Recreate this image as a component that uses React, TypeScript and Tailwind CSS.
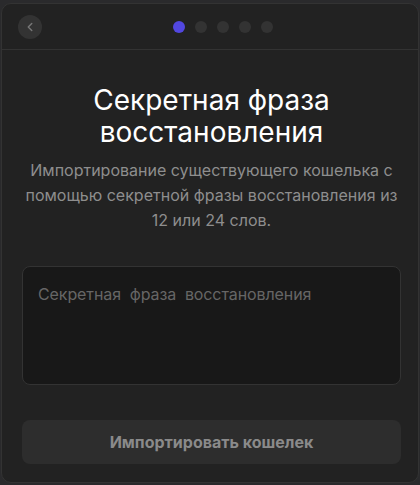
import { ChevronLeft } from "lucide-react";

export default function App() {
  const steps = [0, 1, 2, 3, 4];
  return (
    <div className="h-[485px] w-[420px] bg-[#2a2a2c] pt-[3px] pl-[1px] font-['Inter','Noto_Sans',sans-serif]">
      <div className="flex h-[480px] w-[418px] flex-col rounded-[10px] border border-[#333333] bg-[#222222]">
        <div className="flex h-[46px] items-center border-b border-[#333333] px-[16px]">
          <button className="flex h-[24px] w-[24px] items-center justify-center rounded-full bg-[#333333]">
            <ChevronLeft className="h-[14px] w-[14px] text-[#777777]" strokeWidth={2.5} />
          </button>
          <div className="ml-[131px] flex items-center gap-[10px]">
            {steps.map((s) => (
              <span
                key={s}
                className={`h-[12px] w-[12px] rounded-full ${
                  s === 0 ? "bg-[#5247e0]" : "bg-[#333333]"
                }`}
              />
            ))}
          </div>
        </div>

        <div className="flex flex-1 flex-col pl-[20px] pr-[17px] pt-[34px]">
          <h1 className="text-center text-[28px] font-normal leading-[32px] text-white">
            Секретная фраза
            <br />
            восстановления
          </h1>
          <p className="mt-[10px] text-center text-[16px] leading-[25px] text-[#8e8e8e]">
            Импортирование существующего кошелька с помощью секретной фразы восстановления из 12 или 24 слов.
          </p>

          <textarea
            placeholder="Секретная  фраза  восстановления"
            className="mt-[33px] h-[119px] w-full resize-none rounded-[8px] border border-[#333333] bg-[#181818] px-[15px] py-[16px] text-[16px] leading-[22px] tracking-[-0.1px] text-white outline-none placeholder:text-[#666666]"
          />

          <button className="mt-[35px] h-[44px] w-full rounded-[8px] bg-[#2d2d2d] text-[16px] font-bold text-[#8a8a8a]">
            Импортировать кошелек
          </button>
        </div>
      </div>
    </div>
  );
}
